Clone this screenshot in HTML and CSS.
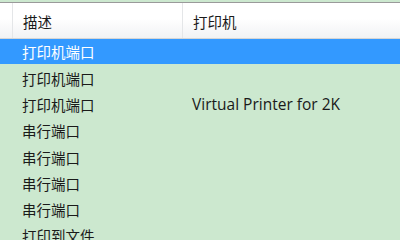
FILE: index.html
```html
<!DOCTYPE html>
<html lang="zh-CN">
<head>
<meta charset="utf-8">
<link rel="stylesheet" href="styles.css">
</head>
<body>
<div class="list">
  <div class="header">
    <div class="h-pad"></div>
    <div class="h-cell c1">描述</div>
    <div class="h-cell c2">打印机</div>
  </div>
  <div class="row selected"><div class="cell c1">打印机端口</div><div class="cell c2"></div></div>
  <div class="row"><div class="cell c1">打印机端口</div><div class="cell c2"></div></div>
  <div class="row"><div class="cell c1">打印机端口</div><div class="cell c2 latin">Virtual Printer for 2K</div></div>
  <div class="row"><div class="cell c1">串行端口</div><div class="cell c2"></div></div>
  <div class="row"><div class="cell c1">串行端口</div><div class="cell c2"></div></div>
  <div class="row"><div class="cell c1">串行端口</div><div class="cell c2"></div></div>
  <div class="row"><div class="cell c1">串行端口</div><div class="cell c2"></div></div>
  <div class="row"><div class="cell c1">打印到文件</div><div class="cell c2"></div></div>
</div>
</body>
</html>
```
FILE: styles.css
```css
html, body {
  margin: 0;
  padding: 0;
  width: 400px;
  height: 240px;
  overflow: hidden;
  background: #cce8cf;
}
.list {
  font-family: "Noto Sans CJK SC", "Noto Sans", sans-serif;
  font-size: 14.5px;
  color: #1a1a1a;
}
.header {
  display: flex;
  height: 37px;
  margin-top: 2px;
  border-top: 1px solid #9a9a9a;
  border-bottom: 1px solid #d5d5d5;
  background: linear-gradient(#ffffff 0%, #ffffff 45%, #f1f2f4 100%);
  box-sizing: border-box;
}
.h-pad {
  width: 12px;
  border-right: 1px solid #e4e6e8;
  flex: none;
}
.h-cell {
  display: flex;
  align-items: center;
  padding-left: 10px;
  padding-top: 2px;
  box-sizing: border-box;
}
.h-cell.c1 {
  width: 170px;
  border-right: 1px solid #e4e6e8;
}
.h-cell.c2 {
  flex: 1;
}
.row {
  display: flex;
  height: 26.3px;
  align-items: center;
}
.row.selected {
  background: #3399ff;
  color: #ffffff;
  height: 25px;
  margin-top: 0;
  margin-bottom: 1px;
}
.cell.c1 {
  width: 183px;
  padding-left: 22px;
  box-sizing: border-box;
}
.cell.c2 {
  padding-left: 9px;
}
.latin {
  font-family: "Open Sans", sans-serif;
  font-size: 15.5px;
}
```
